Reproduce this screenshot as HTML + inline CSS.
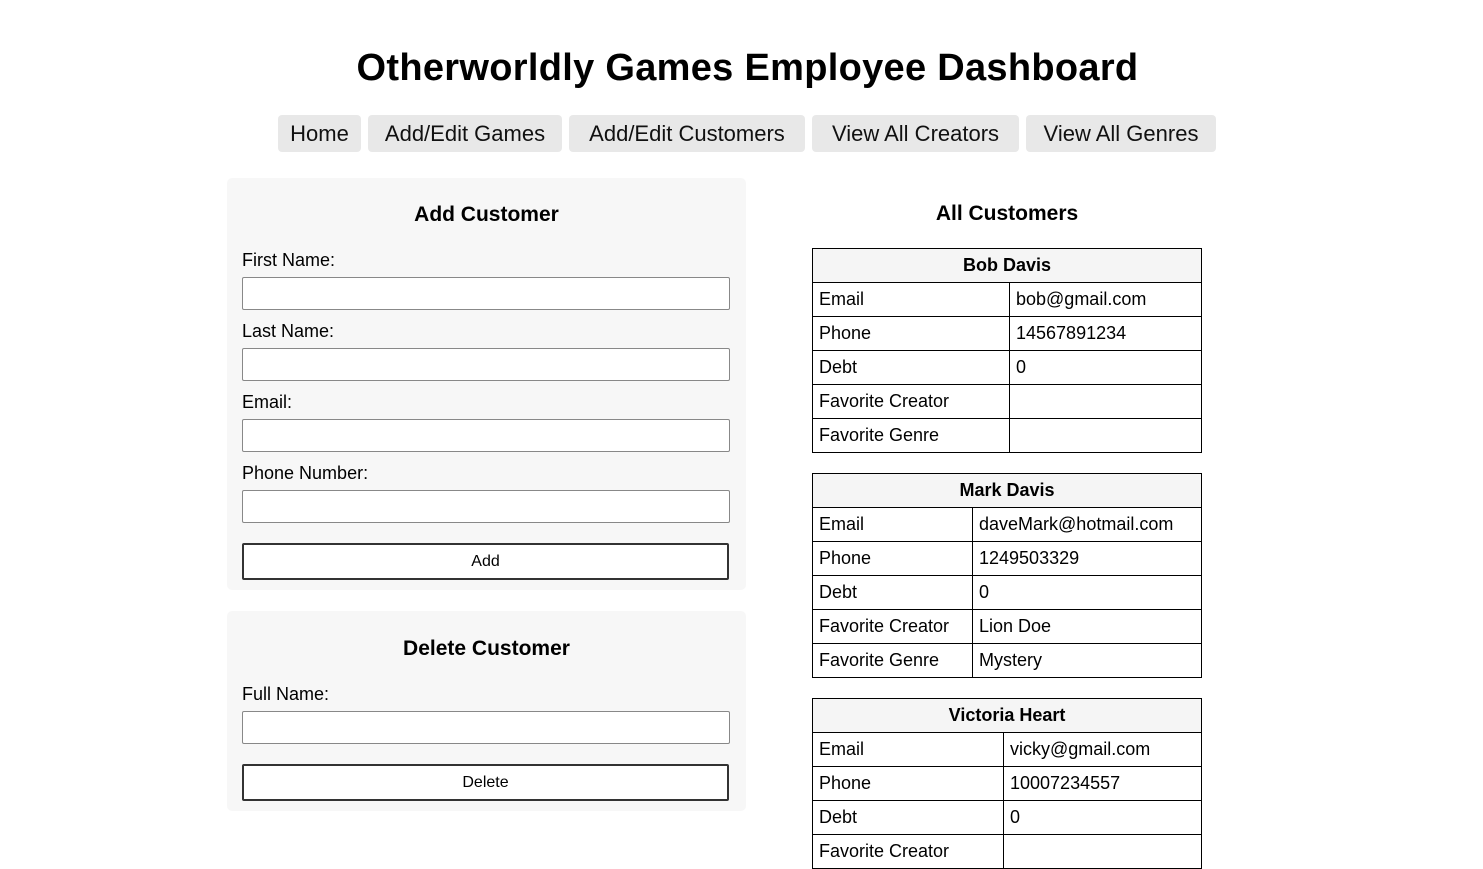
<!DOCTYPE html>
<html><head><style>
body{margin:0;width:1483px;height:829px;overflow:hidden;background:#fff;font-family:"Liberation Sans",sans-serif;color:#000;position:relative}
h1{position:absolute;left:0;width:1495px;top:47px;margin:0;text-align:center;font-size:38px;font-weight:bold;letter-spacing:0.3px}
.nav{position:absolute;top:115px;height:37px;background:#e8e8e8;border-radius:4px;font-size:22px;line-height:37px;text-align:center;color:#111}
.panel{position:absolute;left:227px;width:519px;background:#f7f7f7;border-radius:5px}
.panel h2{margin:0;position:absolute;left:0;width:100%;text-align:center;font-size:21px;font-weight:bold}
.lbl{position:absolute;left:15px;font-size:18px}
.inp{position:absolute;left:15px;width:486px;height:31px;background:#fff;border:1px solid #888;border-radius:2px}
.btn{position:absolute;left:15px;width:483px;height:33px;background:#fff;border:2px solid #333;border-radius:2px;text-align:center;line-height:33px;font-size:16px}
table{position:absolute;left:812px;width:390px;border-collapse:collapse;font-size:18px;table-layout:fixed}
td,th{border:1px solid #000;height:34px;padding:0 6px;box-sizing:border-box}
th{background:#f5f5f5;font-weight:bold;text-align:center}
.sec{position:absolute;left:812px;width:390px;text-align:center;font-size:21px;font-weight:bold;top:202px}
</style></head><body>
<h1>Otherworldly Games Employee Dashboard</h1>
<div class="nav" style="left:278px;width:83px">Home</div>
<div class="nav" style="left:368px;width:194px">Add/Edit Games</div>
<div class="nav" style="left:569px;width:236px">Add/Edit Customers</div>
<div class="nav" style="left:812px;width:207px">View All Creators</div>
<div class="nav" style="left:1026px;width:190px">View All Genres</div>

<div class="panel" style="top:178px;height:412px">
<h2 style="top:25px">Add Customer</h2>
<div class="lbl" style="top:72px">First Name:</div><div class="inp" style="top:99px"></div>
<div class="lbl" style="top:143px">Last Name:</div><div class="inp" style="top:170px"></div>
<div class="lbl" style="top:214px">Email:</div><div class="inp" style="top:241px"></div>
<div class="lbl" style="top:285px">Phone Number:</div><div class="inp" style="top:312px"></div>
<div class="btn" style="top:365px">Add</div>
</div>
<div class="panel" style="top:611px;height:200px">
<h2 style="top:26px">Delete Customer</h2>
<div class="lbl" style="top:73px">Full Name:</div><div class="inp" style="top:100px"></div>
<div class="btn" style="top:153px">Delete</div>
</div>

<div class="sec">All Customers</div>
<table style="top:248px"><colgroup><col style="width:197px"><col></colgroup>
<tr><th colspan="2">Bob Davis</th></tr>
<tr><td>Email</td><td>bob@gmail.com</td></tr>
<tr><td>Phone</td><td>14567891234</td></tr>
<tr><td>Debt</td><td>0</td></tr>
<tr><td>Favorite Creator</td><td></td></tr>
<tr><td>Favorite Genre</td><td></td></tr>
</table>
<table style="top:473px"><colgroup><col style="width:160px"><col></colgroup>
<tr><th colspan="2">Mark Davis</th></tr>
<tr><td>Email</td><td>daveMark@hotmail.com</td></tr>
<tr><td>Phone</td><td>1249503329</td></tr>
<tr><td>Debt</td><td>0</td></tr>
<tr><td>Favorite Creator</td><td>Lion Doe</td></tr>
<tr><td>Favorite Genre</td><td>Mystery</td></tr>
</table>
<table style="top:698px"><colgroup><col style="width:191px"><col></colgroup>
<tr><th colspan="2">Victoria Heart</th></tr>
<tr><td>Email</td><td>vicky@gmail.com</td></tr>
<tr><td>Phone</td><td>10007234557</td></tr>
<tr><td>Debt</td><td>0</td></tr>
<tr><td>Favorite Creator</td><td></td></tr>
</table>
</body></html>
